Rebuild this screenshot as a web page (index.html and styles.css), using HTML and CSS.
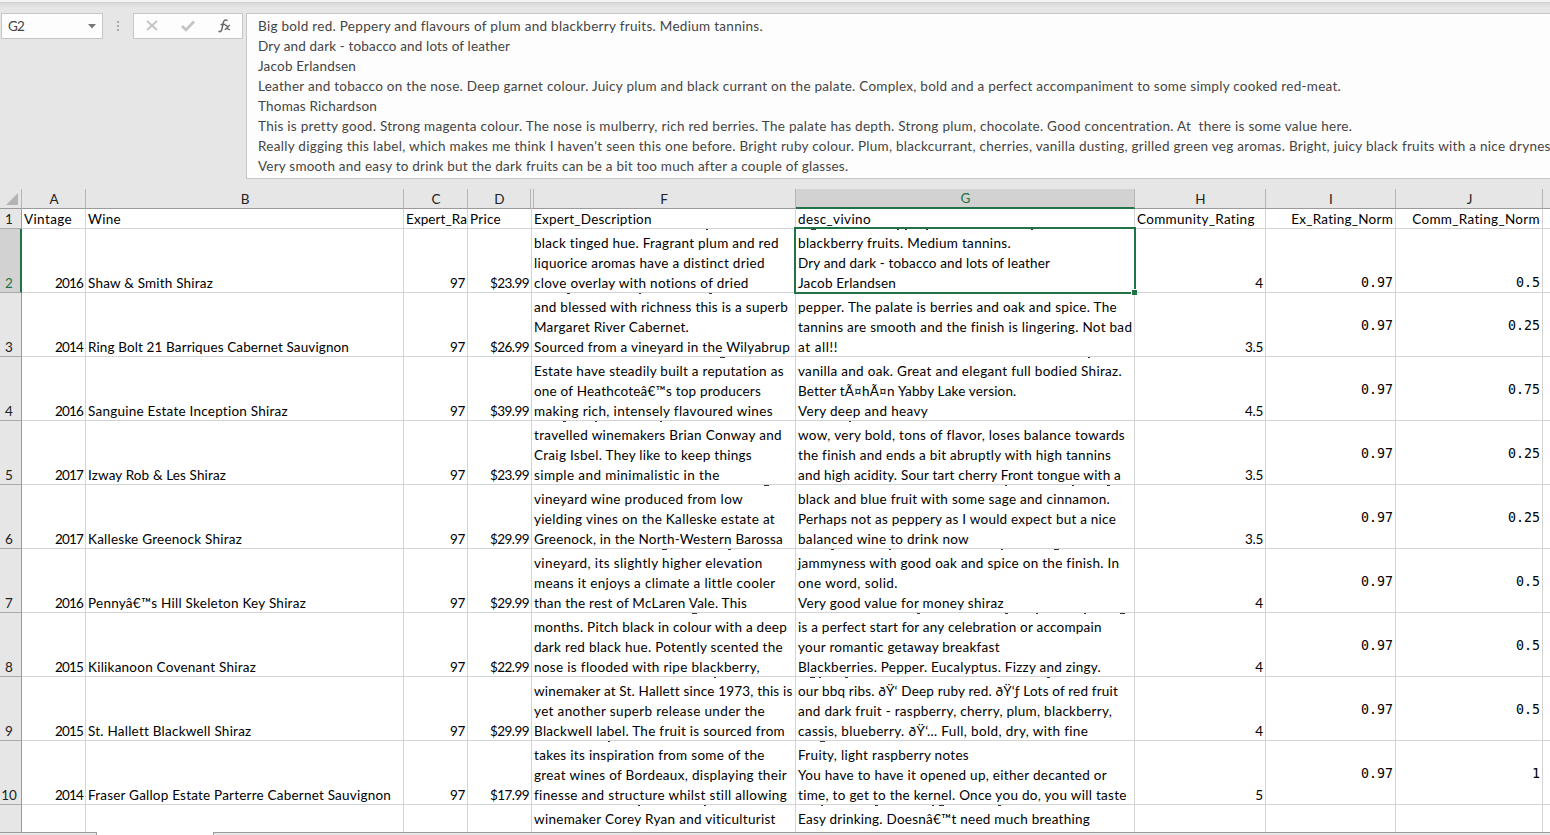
FILE: index.html
```
<!DOCTYPE html>
<html lang="en">
<head>
<meta charset="utf-8">
<title>Wine ratings</title>
<link rel="stylesheet" href="styles.css">
</head>
<body>
<header class="bar">
  <div class="namebox"><span data-w="16">G2</span><svg width="8" height="5"><path d="M0 0h8L4 4.5z" fill="#777"/></svg></div>
  <svg class="dots" width="2" height="11"><path d="M0 0h2v2H0zM0 4h2v2H0zM0 8h2v2H0z" fill="#ababab"/></svg>
  <div class="tools">
    <svg width="110" height="26" viewBox="0 0 110 26" fill="none">
      <path d="M14 8l10 9M24 8l-10 9" stroke="#c3c3c3" stroke-width="1.8"/>
      <path d="M49 13l4 4 8-8.500" stroke="#c3c3c3" stroke-width="2.600"/>
      <path d="M94.500 7.500c-2.200-1.200-3.700-.3-4.200 2.200l-1.500 6.800c-.5 2-1.600 2.600-3.300 1.800M87.500 11.500h5" stroke="#666" stroke-width="1.500"/>
      <path d="M92 12.500c1.600-.6 2 .2 2.400 1.700.5 1.900.9 2.800 2.600 2.100M97 12.200c-1.500.2-3.500 4.300-5.300 4.400" stroke="#666" stroke-width="1.300"/>
    </svg>
  </div>
  <div class="formula">
    <p data-w="505">Big bold red. Peppery and flavours of plum and blackberry fruits. Medium tannins.</p>
    <p data-w="252">Dry and dark - tobacco and lots of leather</p>
    <p data-w="98">Jacob Erlandsen</p>
    <p data-w="1083">Leather and tobacco on the nose. Deep garnet colour. Juicy plum and black currant on the palate. Complex, bold and a perfect accompaniment to some simply cooked red-meat.</p>
    <p data-w="119">Thomas Richardson</p>
    <p data-w="1094">This is pretty good. Strong magenta colour. The nose is mulberry, rich red berries. The palate has depth. Strong plum, chocolate. Good concentration. At  there is some value here.</p>
    <p data-w="1293">Really digging this label, which makes me think I haven't seen this one before. Bright ruby colour. Plum, blackcurrant, cherries, vanilla dusting, grilled green veg aromas. Bright, juicy black fruits with a nice drynes</p>
    <p data-w="590">Very smooth and easy to drink but the dark fruits can be a bit too much after a couple of glasses.</p>
  </div>
</header>
<main class="sheet">
  <div class="row letters">
    <div class="corner"><svg width="12" height="12"><path d="M12 0v12H0z" fill="#b4b4b4"/></svg></div>
    <div>A</div><div>B</div><div>C</div><div class="hid">D</div><div>F</div><div class="on">G</div><div>H</div><div>I</div><div>J</div><div></div>
  </div>
  <div class="row titles">
    <div class="n"><p>1</p></div>
    <div><p data-w="48">Vintage</p></div><div><p data-w="33">Wine</p></div><div><p data-w="61">Expert_Ra</p></div><div><p data-w="31">Price</p></div>
    <div><p data-w="118">Expert_Description</p></div><div><p data-w="73">desc_vivino</p></div><div><p data-w="118">Community_Rating</p></div>
    <div class="r"><p data-w="102">Ex_Rating_Norm</p></div><div class="r"><p data-w="128">Comm_Rating_Norm</p></div><div></div>
  </div>
  <div class="row">
    <div class="n on"><p>2</p></div><div class="r"><p data-w="28">2016</p></div><div><p data-w="125">Shaw &amp; Smith Shiraz</p></div><div class="r"><p data-w="15">97</p></div><div class="r"><p data-w="39">$23.99</p></div>
    <div><svg class="tails"><path d="M174 0h2"/></svg><p data-w="245">black tinged hue. Fragrant plum and red</p><p data-w="231">liquorice aromas have a distinct dried</p><p data-w="215">clove overlay with notions of dried</p></div>
    <div class="sel"><svg class="tails"><path d="M15 0h5M101 0h2M109 0h2M130 0h2M235 0h2"/></svg><p data-w="213">blackberry fruits. Medium tannins.</p><p data-w="252">Dry and dark - tobacco and lots of leather</p><p data-w="98">Jacob Erlandsen</p><i class="handle"></i></div>
    <div class="r"><p>4</p></div><div class="r m"><p>0.97</p></div><div class="r m"><p>0.5</p></div><div></div>
  </div>
  <div class="row">
    <div class="n"><p>3</p></div><div class="r"><p data-w="28">2014</p></div><div><p data-w="261">Ring Bolt 21 Barriques Cabernet Sauvignon</p></div><div class="r"><p data-w="15">97</p></div><div class="r"><p data-w="39">$26.99</p></div>
    <div><svg class="tails"><path d="M35 0h3M107 0h2M177 0h3"/></svg><p data-w="254">and blessed with richness this is a superb</p><p data-w="155">Margaret River Cabernet.</p><p data-w="256">Sourced from a vineyard in the Wilyabrup</p></div>
    <div><svg class="tails"><path d="M37 0h4M46 0h2M165 0h2"/></svg><p data-w="319">pepper. The palate is berries and oak and spice. The</p><p data-w="334">tannins are smooth and the finish is lingering. Not bad</p><p data-w="40">at all!!</p></div>
    <div class="r"><p data-w="18">3.5</p></div><div class="r m c"><p>0.97</p></div><div class="r m c"><p>0.25</p></div><div></div>
  </div>
  <div class="row">
    <div class="n"><p>4</p></div><div class="r"><p data-w="28">2016</p></div><div><p data-w="200">Sanguine Estate Inception Shiraz</p></div><div class="r"><p data-w="15">97</p></div><div class="r"><p data-w="39">$39.99</p></div>
    <div><svg class="tails"><path d="M188 0h5"/></svg><p data-w="250">Estate have steadily built a reputation as</p><p data-w="227">one of Heathcoteâ€™s top producers</p><p data-w="239">making rich, intensely flavoured wines</p></div>
    <div><svg class="tails"><path d="M292 0h2"/></svg><p data-w="324">vanilla and oak. Great and elegant full bodied Shiraz.</p><p data-w="218">Better tÃ¤hÃ¤n Yabby Lake version.</p><p data-w="130">Very deep and heavy</p></div>
    <div class="r"><p data-w="18">4.5</p></div><div class="r m c"><p>0.97</p></div><div class="r m c"><p>0.75</p></div><div></div>
  </div>
  <div class="row">
    <div class="n"><p>5</p></div><div class="r"><p data-w="28">2017</p></div><div><p data-w="138">Izway Rob &amp; Les Shiraz</p></div><div class="r"><p data-w="15">97</p></div><div class="r"><p data-w="39">$23.99</p></div>
    <div><svg class="tails"><path d="M31 0h3M63 0h2M128 0h2"/></svg><p data-w="248">travelled winemakers Brian Conway and</p><p data-w="218">Craig Isbel. They like to keep things</p><p data-w="186">simple and minimalistic in the</p></div>
    <div><svg class="tails"><path d="M53 0h2"/></svg><p data-w="327">wow, very bold, tons of flavor, loses balance towards</p><p data-w="313">the finish and ends a bit abruptly with high tannins</p><p data-w="323">and high acidity. Sour tart cherry Front tongue with a</p></div>
    <div class="r"><p data-w="18">3.5</p></div><div class="r m c"><p>0.97</p></div><div class="r m c"><p>0.25</p></div><div></div>
  </div>
  <div class="row">
    <div class="n"><p>6</p></div><div class="r"><p data-w="28">2017</p></div><div><p data-w="154">Kalleske Greenock Shiraz</p></div><div class="r"><p data-w="15">97</p></div><div class="r"><p data-w="39">$29.99</p></div>
    <div><svg class="tails"><path d="M232 0h5"/></svg><p data-w="209">vineyard wine produced from low</p><p data-w="241">yielding vines on the Kalleske estate at</p><p data-w="249">Greenock, in the North-Western Barossa</p></div>
    <div><svg class="tails"><path d="M209 0h2M276 0h2M311 0h3"/></svg><p data-w="312">black and blue fruit with some sage and cinnamon.</p><p data-w="318">Perhaps not as peppery as I would expect but a nice</p><p data-w="171">balanced wine to drink now</p></div>
    <div class="r"><p data-w="18">3.5</p></div><div class="r m c"><p>0.97</p></div><div class="r m c"><p>0.25</p></div><div></div>
  </div>
  <div class="row">
    <div class="n"><p>7</p></div><div class="r"><p data-w="28">2016</p></div><div><p data-w="218">Pennyâ€™s Hill Skeleton Key Shiraz</p></div><div class="r"><p data-w="15">97</p></div><div class="r"><p data-w="39">$29.99</p></div>
    <div><svg class="tails"><path d="M130 0h5M196 0h3"/></svg><p data-w="229">vineyard, its slightly higher elevation</p><p data-w="241">means it enjoys a climate a little cooler</p><p data-w="213">than the rest of McLaren Vale. This</p></div>
    <div><svg class="tails"><path d="M35 0h3M93 0h2M205 0h2M258 0h5"/></svg><p data-w="321">jammyness with good oak and spice on the finish. In</p><p data-w="100">one word, solid.</p><p data-w="206">Very good value for money shiraz</p></div>
    <div class="r"><p>4</p></div><div class="r m c"><p>0.97</p></div><div class="r m c"><p>0.5</p></div><div></div>
  </div>
  <div class="row">
    <div class="n"><p>8</p></div><div class="r"><p data-w="28">2015</p></div><div><p data-w="168">Kilikanoon Covenant Shiraz</p></div><div class="r"><p data-w="15">97</p></div><div class="r"><p data-w="39">$22.99</p></div>
    <div><svg class="tails"><path d="M160 0h5"/></svg><p data-w="253">months. Pitch black in colour with a deep</p><p data-w="249">dark red black hue. Potently scented the</p><p data-w="226">nose is flooded with ripe blackberry,</p></div>
    <div><svg class="tails"><path d="M121 0h3M209 0h3M240 0h2M288 0h2M324 0h5"/></svg><p data-w="304">is a perfect start for any celebration or accompain</p><p data-w="202">your romantic getaway breakfast</p><p data-w="303">Blackberries. Pepper. Eucalyptus. Fizzy and zingy.</p></div>
    <div class="r"><p>4</p></div><div class="r m c"><p>0.97</p></div><div class="r m c"><p>0.5</p></div><div></div>
  </div>
  <div class="row">
    <div class="n"><p>9</p></div><div class="r"><p data-w="28">2015</p></div><div><p data-w="163">St. Hallett Blackwell Shiraz</p></div><div class="r"><p data-w="15">97</p></div><div class="r"><p data-w="39">$29.99</p></div>
    <div><svg class="tails"><path d="M182 0h2"/></svg><p data-w="258">winemaker at St. Hallett since 1973, this is</p><p data-w="231">yet another superb release under the</p><p data-w="251">Blackwell label. The fruit is sourced from</p></div>
    <div><svg class="tails"><path d="M14 0h5M23 0h2M49 0h3M251 0h3"/></svg><p data-w="320">our bbq ribs. ðŸ‘ Deep ruby red. ðŸ‘ƒ Lots of red fruit</p><p data-w="314">and dark fruit - raspberry, cherry, plum, blackberry,</p><p data-w="290">cassis, blueberry. ðŸ‘… Full, bold, dry, with fine</p></div>
    <div class="r"><p>4</p></div><div class="r m c"><p>0.97</p></div><div class="r m c"><p>0.5</p></div><div></div>
  </div>
  <div class="row">
    <div class="n"><p>10</p></div><div class="r"><p data-w="28">2014</p></div><div><p data-w="303">Fraser Gallop Estate Parterre Cabernet Sauvignon</p></div><div class="r"><p data-w="15">97</p></div><div class="r"><p data-w="39">$17.99</p></div>
    <div><svg class="tails"><path d="M76 0h2"/></svg><p data-w="231">takes its inspiration from some of the</p><p data-w="253">great wines of Bordeaux, displaying their</p><p data-w="253">finesse and structure whilst still allowing</p></div>
    <div><svg class="tails"><path d="M24 0h5"/></svg><p data-w="171">Fruity, light raspberry notes</p><p data-w="309">You have to have it opened up, either decanted or</p><p data-w="329">time, to get to the kernel. Once you do, you will taste</p></div>
    <div class="r"><p>5</p></div><div class="r m c"><p>0.97</p></div><div class="r m c"><p>1</p></div><div></div>
  </div>
  <div class="row last">
    <div class="n"></div><div></div><div></div><div></div><div></div>
    <div><svg class="tails"><path d="M106 0h2M172 0h2"/></svg><p data-w="242">winemaker Corey Ryan and viticulturist</p></div>
    <div><svg class="tails"><path d="M25 0h2M79 0h3M136 0h2M143 0h5M202 0h3"/></svg><p data-w="292">Easy drinking. Doesnâ€™t need much breathing</p></div>
    <div></div><div></div><div></div><div></div>
  </div>
</main>
<footer class="tabs"><div class="left"></div><div class="tab"></div><div class="right"></div></footer>
<script src="fit.js"></script>
</body>
</html>
```
FILE: styles.css
```
* { box-sizing: border-box; }
body {
  margin: 0;
  width: 1550px;
  height: 835px;
  overflow: hidden;
  background: #e6e6e6;
  color: #000;
  font: 13.5px/20px Lato, "Open Sans", sans-serif;
}
p { margin: 0; width: max-content; white-space: pre; }
svg { display: block; flex: none; }
.bar {
  display: flex;
  align-items: flex-start;
  height: 189px;
  padding: 13px 0 0 1px;
  background: linear-gradient(#f4f4f2 0 2px, #cfcecd 2px, #dcdcdc 4px, #e6e6e6 8px);
  color: #444;
}
.namebox {
  display: flex;
  align-items: center;
  justify-content: space-between;
  width: 102px;
  height: 26px;
  padding: 0 6px;
  border: 1px solid #c6c6c6;
  background: #fdfdfd;
}
.dots { margin: 8px 14px 0 14px; }
.tools {
  width: 110px;
  height: 26px;
  margin-right: 3px;
  border: 1px solid #c6c6c6;
  background: #fdfdfd;
}
.tools svg { margin: -1px; }
.formula {
  flex: 1;
  min-width: 0;
  height: 166px;
  padding: 2px 0 0 11px;
  overflow: hidden;
  border: solid #c6c6c6;
  border-width: 1px 0 1px 1px;
  background: #fdfdfd;
}
.row {
  display: grid;
  grid-template-columns: 22px 64px 318px 64px 64px 264px 339px 131px 130px 147px 8px;
  height: 64px;
  background: #fff;
}
.row > div {
  position: relative;
  display: flex;
  flex-direction: column;
  justify-content: flex-end;
  min-width: 0;
  padding-left: 2px;
  overflow: hidden;
  border: solid #d4d4d4;
  border-width: 0 1px 1px 0;
}
.row > div > p:last-of-type { margin-bottom: -1px; }
.row > .r { align-items: flex-end; padding: 0 2px 0 0; }
.row > .m { font: 13.3px/20px "DejaVu Sans Mono", monospace; }
.row > .c { justify-content: center; padding-top: 1px; }
.row > .n {
  align-items: center;
  padding: 0 3px 0 0;
  border-right-color: #9b9b9b;
  border-bottom-color: #ababab;
  background: #e6e6e6;
  color: #222;
}
.row > .n.on {
  padding-right: 2px;
  border-right: 2px solid #217346;
  background: #d2d2d2;
  color: #217346;
}
.titles { height: 20px; }
.row.letters { height: 20px; background: #e6e6e6; }
.row.letters > div {
  align-items: center;
  padding: 0 0 0 1px;
  line-height: 18px;
  border-color: #b5b5b5;
  border-bottom-color: #9b9b9b;
  color: #222;
}
.row.letters > .corner { align-items: flex-end; padding: 0 3px 3px 0; }
.row.letters > .hid { border-right: 4px double #b5b5b5; margin-right: -2px; }
.row.letters > .on {
  border-bottom: 2px solid #217346;
  line-height: 17px;
  background: #d2d2d2;
  color: #217346;
}
.row > .sel { overflow: visible; }
.sel::before {
  content: "";
  position: absolute;
  z-index: 1;
  inset: -2px -2px -2px -2px;
  border: 2px solid #217346;
}
.handle {
  position: absolute;
  z-index: 2;
  right: -3px;
  bottom: -3px;
  width: 6px;
  height: 6px;
  border: solid #fff;
  border-width: 1px 0 0 1px;
  background: #217346;
}
.tails {
  position: absolute;
  top: 0;
  left: 0;
  width: 100%;
  height: 2px;
  stroke: #333;
  stroke-width: 2px;
}
.last { height: 27px; }
.row.last > div { justify-content: flex-start; padding-top: 4px; border-bottom: 0; }
.tabs { display: grid; grid-template-columns: 96px 118px 1fr; height: 3px; }
.tabs > div { border-top: 1px solid #9b9b9b; background: #e6e6e6; }
.tabs > .tab { border: solid #9b9b9b; border-width: 0 1px 0 1px; background: #fff; }
```
FILE: fit.js
```
document.querySelectorAll("[data-w]").forEach(function (line) {
  var natural = line.getBoundingClientRect().width;
  var spacing = (Number(line.dataset.w) - natural) / line.textContent.length;
  line.style.letterSpacing = spacing.toFixed(4) + "px";
});
```
